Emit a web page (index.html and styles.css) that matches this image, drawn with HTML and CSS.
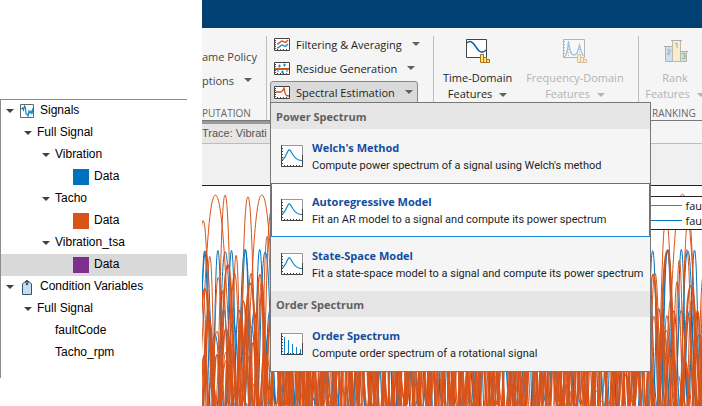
FILE: index.html
```html
<!DOCTYPE html>
<html lang="en">
<head>
<meta charset="utf-8">
<title>Diagnostic Feature Designer</title>
<link rel="stylesheet" href="styles.css">
</head>
<body>
<svg class="defs" aria-hidden="true">
  <symbol id="axes" viewBox="0 0 22 22">
    <path d="M.5.5h21v21H.5z" fill="#fff" stroke="#999"/>
    <path d="M.5 0v21.5H22M21.500 10v12" fill="none" stroke="#444"/>
    <path d="M1.500 3v17" fill="none" stroke="#444" stroke-dasharray="1 2"/>
    <path d="M3 20.500h18" fill="none" stroke="#444" stroke-dasharray="1 2"/>
  </symbol>
  <symbol id="peak" viewBox="0 0 22 22">
    <use href="#axes"/>
    <path d="M1.500 15L4 12 7 6Q8.300 3.800 9.600 6L12 10Q15.500 15.500 21 15.500" fill="none" stroke="#0c85c8" stroke-width="1.200"/>
  </symbol>
  <symbol id="small-axes" viewBox="0 0 16 13">
    <path d="M.5.5h15v12H.5z" fill="#fff" stroke="#444"/>
    <path d="M1.500 2v9" stroke="#444" stroke-dasharray="1 1"/>
    <path d="M3 11.500h12" stroke="#444" stroke-dasharray="1 2"/>
  </symbol>
  <symbol id="mini-bars" viewBox="0 0 10 9">
    <path d="M.5.5h3v8h-3zM3.500 3.500h3v5h-3zM6.500 5.500h3v3h-3z" fill="#ffe48a" stroke="#a8720c"/>
  </symbol>
</svg>

<aside class="sidebar">
  <ul class="tree">
    <li class="node"><span class="caret"></span>
      <svg class="node-icon" viewBox="0 0 14 14"><path d="M.5.5h13v13H.5z" fill="#fff" stroke="#666"/><path d="M1.500 5l1-1 1 2 1-4 1 2 .5 6 1 0 1 2 1-5 1 2 1-2 1 3 1-6" fill="none" stroke="#0c85c8" stroke-width="1.200"/></svg>
      <span class="name">Signals</span></li>
    <li class="node level-1"><span class="caret"></span><span class="name">Full Signal</span></li>
    <li class="node level-2"><span class="caret"></span><span class="name">Vibration</span></li>
    <li class="node level-3"><span class="swatch blue"></span><span class="name">Data</span></li>
    <li class="node level-2"><span class="caret"></span><span class="name">Tacho</span></li>
    <li class="node level-3"><span class="swatch orange"></span><span class="name">Data</span></li>
    <li class="node level-2"><span class="caret"></span><span class="name">Vibration_tsa</span></li>
    <li class="node level-3 selected"><span class="swatch purple"></span><span class="name">Data</span></li>
    <li class="node"><span class="caret"></span>
      <svg class="node-icon" viewBox="0 0 14 16"><path d="M2.500 15.500V5L5 2.500h4L11.500 5v10.500z" fill="#c6ddee" stroke="#34536e"/><path d="M7 6V1M5 4l2-3 2 3" fill="none" stroke="#34536e"/><circle cx="7" cy="5" r="1.200" fill="#34536e"/></svg>
      <span class="name">Condition Variables</span></li>
    <li class="node level-1"><span class="caret"></span><span class="name">Full Signal</span></li>
    <li class="node level-4"><span class="name">faultCode</span></li>
    <li class="node level-4"><span class="name">Tacho_rpm</span></li>
  </ul>
</aside>

<main class="app">
  <div class="titlebar"></div>
  <div class="ribbon">
    <section class="group group-first">
      <div class="tools">
        <button class="tool plain">ame Policy</button>
        <button class="tool plain">ptions<span class="arrow"></span></button>
      </div>
      <h2 class="group-label">PUTATION</h2>
    </section>
    <section class="group group-tools">
      <div class="tools">
        <button class="tool"><svg class="tool-icon" viewBox="0 0 16 13"><use href="#small-axes"/><path d="M3 6c3 0 3-3 5-3s2 2 4 1l2-2" fill="none" stroke="#e0561c" stroke-width="1.500"/><path d="M3 10c3 0 3-3 5-3s2 2 4 1l2-2" fill="none" stroke="#2a8fd0" stroke-width="1.500"/></svg>Filtering &amp; Averaging<span class="arrow"></span></button>
        <button class="tool"><svg class="tool-icon" viewBox="0 0 16 13"><use href="#small-axes"/><path d="M1 7h14" stroke="#d94f14" stroke-width="2"/><path d="M4 4h3M5.500 2.500v3M9 3h3M10.500 1.500v3M3 9h2M7 10h3M8.500 8.500v3M12 9h2" stroke="#1683c6"/></svg>Residue Generation<span class="arrow"></span></button>
        <button class="tool active"><svg class="tool-icon" viewBox="0 0 16 13"><use href="#small-axes"/><path d="M2 6h4c2 0 3-1 4-4 1 4 1 7 2.500 7.500L15 10" fill="none" stroke="#d94f14" stroke-width="1.300"/></svg>Spectral Estimation<span class="arrow"></span></button>
      </div>
    </section>
    <section class="group group-features">
      <button class="big"><svg class="big-icon" viewBox="0 0 26 26"><path d="M1.500 1.500h20v18h-20z" fill="#fff" stroke="#444"/><path d="M2 5c3-3 6-1 9 4s6 7 10 3" fill="none" stroke="#0b62b0" stroke-width="1.500"/><use href="#mini-bars" x="15" y="16" width="10" height="9"/></svg><span>Time-Domain</span><span>Features<span class="arrow"></span></span></button>
      <button class="big" disabled><svg class="big-icon" viewBox="0 0 26 26"><path d="M1.500 1.500h21v18h-21z" fill="#fff" stroke="#555"/><path d="M2.500 3v16M6.500 5v14M17.500 8v11" stroke="#555" stroke-dasharray="1 2"/><path d="M3 18c2-1 2.500-5 3.500-15 1 8 2 14 5.500 14s4-5 5.500-10c1 4 2 9 4 11" fill="none" stroke="#2079c0" stroke-width="1.300"/><use href="#mini-bars" x="15" y="16" width="10" height="9"/></svg><span>Frequency-Domain</span><span>Features<span class="arrow"></span></span></button>
    </section>
    <section class="group group-ranking">
      <div class="tools">
        <button class="big" disabled><svg class="big-icon" viewBox="0 0 26 26"><path d="M3.500 8.500h7v15h-7z" fill="#8fc1e8" stroke="#456"/><path d="M10.500 2.500h8v21h-8z" fill="#ffe48a" stroke="#665"/><path d="M18.500 13.500h6v10h-6z" fill="#a5d08c" stroke="#465"/><path d="M2 8.500h8M9 2.500h11M18 13.500h8" stroke="#444"/><path d="M13 6l2-1v5M5 12h3v2l-3 2h3M20 15.500h3v5h-3M21 18h2" fill="none" stroke="#333"/></svg><span>Rank</span><span>Features<span class="arrow"></span></span></button>
      </div>
      <h2 class="group-label">RANKING</h2>
    </section>
  </div>
  <div class="tabstrip"><span class="tab">Trace: Vibrati</span></div>
  <div class="figure">
    <svg class="plot" id="plot" role="img" aria-label="Vibration signal trace" viewBox="0 0 500 220" preserveAspectRatio="xMinYMin slice"></svg>
    <div class="legend">
      <div class="legend-row"><span class="line orange"></span>fau</div>
      <div class="legend-row"><span class="line blue"></span>fau</div>
    </div>
  </div>

  <div class="menu">
    <h3>Power Spectrum</h3>
    <button class="item"><svg class="item-icon"><use href="#peak"/></svg><span class="item-text"><b>Welch's Method</b><span>Compute power spectrum of a signal using Welch's method</span></span></button>
    <button class="item current"><svg class="item-icon"><use href="#peak"/></svg><span class="item-text"><b>Autoregressive Model</b><span>Fit an AR model to a signal and compute its power spectrum</span></span></button>
    <button class="item"><svg class="item-icon"><use href="#peak"/></svg><span class="item-text"><b>State-Space Model</b><span>Fit a state-space model to a signal and compute its power spectrum</span></span></button>
    <h3>Order Spectrum</h3>
    <button class="item"><svg class="item-icon" viewBox="0 0 22 22"><use href="#axes"/><path d="M3.500 4v17M7.500 7v14M11.500 11v10M15.500 14v7M19.500 16v5" stroke="#0c85c8"/></svg><span class="item-text"><b>Order Spectrum</b><span>Compute order spectrum of a rotational signal</span></span></button>
  </div>
</main>
<script src="plot.js"></script>
</body>
</html>
```
FILE: styles.css
```css
* { box-sizing: border-box; }
body {
  margin: 0;
  min-height: 100vh;
  display: flex;
  background: #fff;
  color: #1e1e1e;
  font-family: "Open Sans", sans-serif;
  font-size: 11px;
  overflow: hidden;
}
button { font: inherit; color: inherit; background: none; border: 0; padding: 0; text-align: left; }
h2, h3, ul { margin: 0; padding: 0; }
.defs { position: absolute; width: 0; height: 0; }

.sidebar {
  flex: none;
  width: 187px;
  margin: 99px 15px auto 0;
  padding-bottom: 14px;
  border-top: 1px solid #8c8c8c;
  border-left: 1px solid #8c8c8c;
  font: 12px/20px "Liberation Sans", sans-serif;
  color: #000;
}
.tree { list-style: none; }
.node { display: flex; align-items: center; height: 22px; padding-left: 5px; }
.node.level-1 { padding-left: 23px; }
.node.level-2 { padding-left: 41px; }
.node.level-3 { padding-left: 72px; }
.node.level-4 { padding-left: 54px; }
.node.selected { background: #d9d9d9; }
.name { padding-bottom: 2px; }
.caret {
  margin-right: 5px;
  border: 4px solid transparent;
  border-top-color: #404040;
  border-bottom: 0;
}
.node-icon { width: 14px; height: 16px; margin-right: 6px; margin-left: 1px; }
.swatch { width: 16px; height: 16px; margin-right: 5px; }
.swatch.blue { background: #0072bd; }
.swatch.orange { background: #d95319; }
.swatch.purple { background: #7e2f8e; }

.app { position: relative; flex: 1; min-width: 0; display: flex; flex-direction: column; }
.titlebar { height: 28px; background: #004073; }
.ribbon {
  display: flex;
  height: 93px;
  padding-top: 8px;
  background: #f5f5f5;
  border-bottom: 1px solid #777;
  overflow: hidden;
  white-space: nowrap;
}
.group { flex: none; display: flex; flex-direction: column; border-right: 1px solid #bdbdbd; }
.group-first { width: 65px; }
.group-first .tools { padding-top: 9px; }
.group-tools { width: 167px; padding-left: 3px; }
.group-features { width: 205px; flex-direction: row; gap: 14px; padding-left: 9px; }
.group-ranking { border: 0; width: 72px; }
.tools { flex: 1; display: flex; flex-direction: column; align-items: flex-start; }
.group-tools .tools { margin-top: -3px; }
.group-label { padding: 0 13px; font-size: 10px; line-height: 14px; font-weight: normal; color: #666; }
.group-first .group-label { padding: 0; }
.tool { display: flex; align-items: center; height: 24px; padding: 0 4px 2px 3px; border: 1px solid transparent; border-radius: 3px; }
.tool.plain { padding: 0 0 2px; border: 0; color: #444; }
.tool.active { width: 148px; background: #dadada; border-color: #888; }
.tool-icon { width: 16px; height: 13px; margin-right: 6px; }
.tool .arrow { margin-left: 10px; }
.arrow {
  display: inline-block;
  margin-left: 7px;
  vertical-align: 1px;
  border: 4px solid transparent;
  border-top-color: #606060;
  border-bottom: 0;
}
.big { display: flex; flex-direction: column; align-items: center; align-self: flex-start; line-height: 16px; padding-top: 2px; }
.big:disabled { color: #b3b3b3; }
.big:disabled .arrow { border-top-color: #b3b3b3; }
.big:disabled .big-icon { opacity: .4; }
.big-icon { width: 26px; height: 26px; margin-bottom: 6px; }
.group-ranking .big { align-self: center; }

.tabstrip { display: flex; height: 23px; background: #f5f5f5; border-bottom: 1px solid #bdbdbd; }
.tab {
  width: 68px;
  background: #e6e6e6;
  border-top: 3px solid #999;
  font: 11px/19px "Liberation Sans", sans-serif;
  color: #555;
  white-space: nowrap;
}
.figure { position: relative; flex: 1; padding-top: 41px; background: #f0f0f0; overflow: hidden; }
.plot { display: block; width: 100%; min-height: 220px; background: #fff; border-top: 1px solid #222; }
.legend {
  position: absolute;
  top: 52px;
  right: 0;
  padding: 1px 0;
  background: #fff;
  border: 1px solid #222;
  border-right: 0;
  font-size: 11px;
  line-height: 15px;
  color: #111;
}
.legend-row { display: flex; align-items: center; padding-left: 14px; }
.line { width: 39px; height: 1px; margin-right: 3px; }
.line.orange { background: #d95319; }
.line.blue { background: #0072bd; }

.menu {
  position: absolute;
  top: 102px;
  left: 68px;
  width: 381px;
  background: #f5f5f5;
  border: 1px solid #777;
}
.menu h3 { height: 26px; padding-left: 5px; background: #e6e6e6; font-size: 11px; line-height: 28px; color: #606060; }
.item { display: flex; align-items: center; width: 100%; height: 54px; padding-left: 9px; border: 1px solid transparent; white-space: nowrap; }
.item.current { background: #fff; border-color: #1e86d8; }
.item-icon { flex: none; width: 22px; height: 22px; margin-right: 9px; }
.item-text { display: flex; flex-direction: column; padding-top: 2px; font: 11px/18px Roboto, sans-serif; }
.item-text b { font: bold 11px/18px "Open Sans", sans-serif; color: #124da0; }
```
FILE: plot.js
```
// Overlaid oscillating traces, drawn with a seeded generator so the figure is stable.
const plot = document.getElementById('plot');
let seed = 7;
const random = () => (seed = (seed * 16807) % 2147483647) / 2147483647;

function trace(color, period, top, jitter, width, start = -random() * period * 2) {
  let x = start;
  let d = `M${x.toFixed(1)} 240`;
  while (x < 510) {
    const half = period * (0.47 + random() * 0.06);
    const peak = top + random() * jitter;
    const trough = 215 + random() * 40;
    d += `C${(x + half * 0.5).toFixed(1)} 240 ${(x + half * 0.5).toFixed(1)} ${peak.toFixed(1)} ${(x + half).toFixed(1)} ${peak.toFixed(1)}`;
    d += `S${(x + half * 1.5).toFixed(1)} ${trough.toFixed(1)} ${(x + half * 2).toFixed(1)} ${trough.toFixed(1)}`;
    x += half * 2;
  }
  const path = document.createElementNS('http://www.w3.org/2000/svg', 'path');
  path.setAttribute('d', d);
  path.setAttribute('fill', 'none');
  path.setAttribute('stroke', color);
  path.setAttribute('stroke-width', width);
  plot.append(path);
}

const blue = '#0072bd';
const orange = '#d95319';
trace(blue, 14, 63, 2, 1, -4);
trace(blue, 20, 63, 3, 1, -6);
trace(blue, 15, 122, 4, 1);
trace(blue, 18, 122, 30, 1);
trace(orange, 47, 8, 2, 1, -10);
trace(orange, 23, 9, 40, 1, -10);
trace(orange, 16, 36, 90, 1);
trace(orange, 13, 62, 100, 1);
trace(orange, 23, 62, 60, 2, -9);
trace(orange, 15, 95, 90, 1);
trace(orange, 17, 85, 90, 2);
trace(orange, 19, 100, 90, 1);
trace(orange, 12, 120, 70, 2);
trace(orange, 14, 140, 70, 1);
```
